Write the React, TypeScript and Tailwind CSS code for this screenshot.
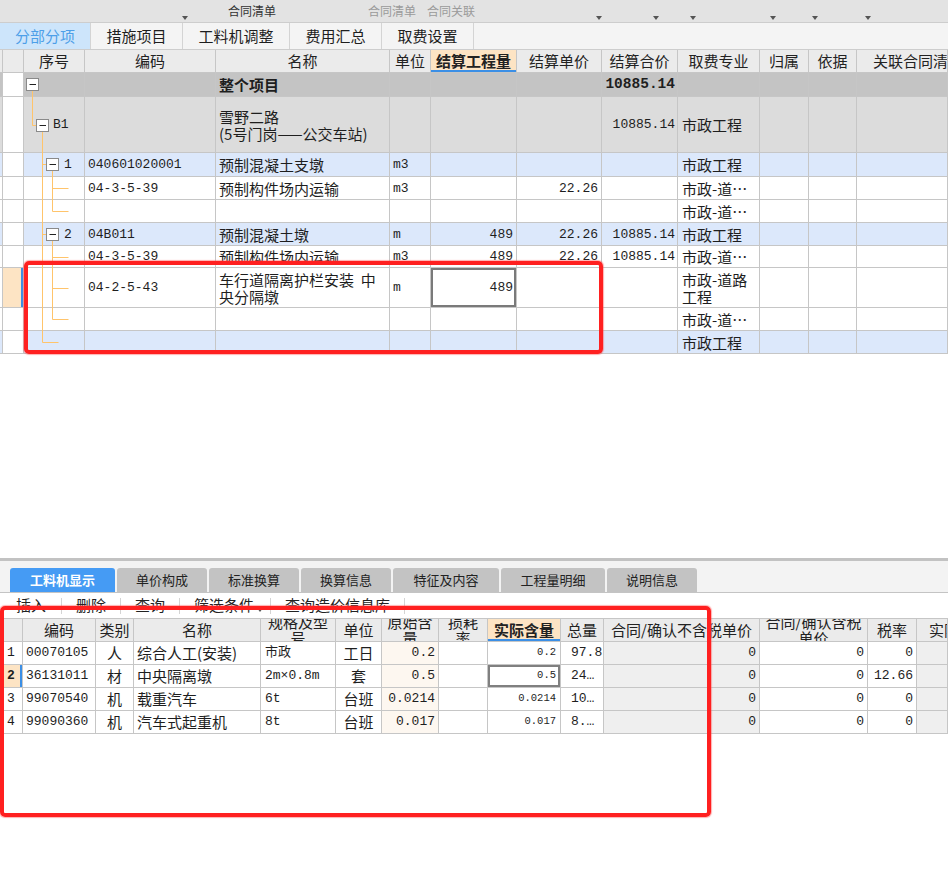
import React from 'react';

const CJK = "font-['Noto_Sans_CJK_SC',sans-serif]";
const MONO = "font-['Liberation_Mono','Noto_Sans_CJK_SC',monospace]";

function Tri() {
  return (
    <span className="inline-block w-0 h-0 border-l-[3px] border-r-[3px] border-t-[4px] border-l-transparent border-r-transparent border-t-[#555]" />
  );
}

function TopBar() {
  return (
    <div className="h-[22px] shrink-0 flex items-center bg-[#e3e3e3] text-[12px] whitespace-nowrap">
      <span className="ml-[182px] self-start mt-[6px]"><Tri /></span>
      <span className="ml-[40px] w-[48px] text-[#333]">合同清单</span>
      <span className="ml-[92px] w-[48px] text-[#9a9a9a]">合同清单</span>
      <span className="ml-[11px] w-[48px] text-[#9a9a9a]">合同关联</span>
      <span className="ml-[121px] self-start mt-[6px]"><Tri /></span>
      <span className="ml-[51px] self-start mt-[6px]"><Tri /></span>
      <span className="ml-[31px] self-start mt-[6px]"><Tri /></span>
      <span className="ml-[74px] self-start mt-[6px]"><Tri /></span>
      <span className="ml-[36px] self-start mt-[6px]"><Tri /></span>
      <span className="ml-[47px] self-start mt-[6px]"><Tri /></span>
    </div>
  );
}

function TabBar() {
  const tabs = [
    { t: '措施项目', w: 'w-[92px]' },
    { t: '工料机调整', w: 'w-[107px]' },
    { t: '费用汇总', w: 'w-[92px]' },
    { t: '取费设置', w: 'w-[92px]' },
  ];
  return (
    <div className="h-[28px] shrink-0 flex bg-[#f4f4f4] border-y border-[#cdcdcd] text-[15px] text-[#1e1e1e]">
      <div className="w-[91px] border-r border-[#d4d4d4] bg-[#cde5fb] text-[#4d9fe8] flex items-center justify-center">分部分项</div>
      {tabs.map((t) => (
        <div key={t.t} className={`${t.w} border-r border-[#d4d4d4] flex items-center justify-center`}>{t.t}</div>
      ))}
    </div>
  );
}

const UW = [
  'w-[22px] border-l',
  'w-[61px]',
  'w-[131px]',
  'w-[174px]',
  'w-[41px]',
  'w-[86px]',
  'w-[85px]',
  'w-[76px]',
  'w-[82px]',
  'w-[49px]',
  'w-[48px]',
  'w-[91px]',
];

const UHEAD = ['', '序号', '编码', '名称', '单位', '结算工程量', '结算单价', '结算合价', '取费专业', '归属', '依据', '关联合同清单'];

type URow = {
  h: string;
  bg: string;
  tree?: React.ReactNode;
  code?: string;
  name?: React.ReactNode;
  unit?: string;
  qty?: string;
  price?: string;
  total?: React.ReactNode;
  spec?: React.ReactNode;
  sel?: boolean;
};

const BLUE = 'bg-[#dce8fb]';

const UROWS: URow[] = [
  { h: 'h-[24px]', bg: 'bg-[#c4c4c4]', name: <b className="font-bold">整个项目</b>, total: <b className="font-bold text-[14.5px]">10885.14</b> },
  {
    h: 'h-[56px]',
    bg: 'bg-[#dcdcdc]',
    tree: <span className={`pl-[29px] ${MONO} text-[13px]`}>B1</span>,
    name: (
      <>
        雪野二路
        <br />
        (5号门岗——公交车站)
      </>
    ),
    total: '10885.14',
    spec: '市政工程',
  },
  { h: 'h-[24px]', bg: BLUE, tree: <span className={`pl-[40px] ${MONO} text-[13px]`}>1</span>, code: '040601020001', name: '预制混凝土支墩', unit: 'm3', spec: '市政工程' },
  { h: 'h-[23px]', bg: 'bg-white', code: '04-3-5-39', name: '预制构件场内运输', unit: 'm3', price: '22.26', spec: '市政-道…' },
  { h: 'h-[23px]', bg: 'bg-white', spec: '市政-道…' },
  { h: 'h-[23px]', bg: BLUE, tree: <span className={`pl-[40px] ${MONO} text-[13px]`}>2</span>, code: '04B011', name: '预制混凝土墩', unit: 'm', qty: '489', price: '22.26', total: '10885.14', spec: '市政工程' },
  { h: 'h-[22px]', bg: 'bg-white', code: '04-3-5-39', name: '预制构件场内运输', unit: 'm3', qty: '489', price: '22.26', total: '10885.14', spec: '市政-道…' },
  {
    h: 'h-[40px]',
    bg: 'bg-white',
    sel: true,
    code: '04-2-5-43',
    name: (
      <>
        车行道隔离护栏安装&nbsp;&nbsp;中
        <br />
        央分隔墩
      </>
    ),
    unit: 'm',
    qty: '489',
    spec: (
      <>
        市政-道路
        <br />
        工程
      </>
    ),
  },
  { h: 'h-[23px]', bg: 'bg-white', spec: '市政-道…' },
  { h: 'h-[23px]', bg: BLUE, spec: '市政工程' },
];

const UC = 'shrink-0 h-full border-r border-[#c6c6c6] flex items-center overflow-hidden whitespace-nowrap';

function TreeLines() {
  const O = '#ffc46b';
  const box = (x: number, y: number) => (
    <g key={`${x}-${y}`}>
      <rect x={x} y={y} width={12} height={12} fill="#fff" stroke="#8a8a8a" strokeWidth={1} />
      <line x1={x + 3} y1={y + 6} x2={x + 9.5} y2={y + 6} stroke="#222" strokeWidth={1} />
    </g>
  );
  return (
    <svg className="absolute left-[24px] top-0 w-[61px] h-[281px] pointer-events-none" width={61} height={281} viewBox="0 0 61 281">
      <g stroke={O} strokeWidth={1} fill="none">
        <path d="M8.5 17.5 V52.5 H12.5" />
        <path d="M18.5 58.5 V269.5 H34.5" />
        <path d="M18.5 91.5 H22.5" />
        <path d="M28.5 97.5 V138.5" />
        <path d="M28.5 115.5 H44.5" />
        <path d="M28.5 138.5 H44.5" />
        <path d="M18.5 161.5 H22.5" />
        <path d="M28.5 167.5 V246.5" />
        <path d="M28.5 184.5 H44.5" />
        <path d="M28.5 215.5 H44.5" />
        <path d="M28.5 246.5 H44.5" />
      </g>
      {box(2.5, 5.5)}
      {box(12.5, 46.5)}
      {box(22.5, 85.5)}
      {box(22.5, 155.5)}
    </svg>
  );
}

function UpperTable() {
  return (
    <div className="shrink-0">
      <div className="flex h-[23px] pl-[2px] bg-[#ebebeb] border-b border-[#c6c6c6] text-[15px] text-[#222]">
        {UHEAD.map((h, i) => (
          <div
            key={i}
            className={`${UW[i]} ${UC} ${i === 11 ? 'justify-start pl-[16px]' : 'justify-center'} ${
              i === 5 ? 'bg-[#fde4c4] font-bold shadow-[inset_0_-2px_0_#3b8fe6]' : ''
            }`}
          >
            {h}
          </div>
        ))}
      </div>
      <div className="relative">
        {UROWS.map((r, idx) => (
          <div key={idx} className={`flex pl-[2px] border-b border-[#c6c6c6] ${r.h} ${r.bg} text-[15px] leading-[17px]`}>
            <div className={`${UW[0]} ${UC} border-[#c6c6c6] ${r.sel ? 'bg-[#fde4c4] shadow-[inset_-2px_0_0_#3b8fe6]' : 'bg-white'}`} />
            <div className={`${UW[1]} ${UC}`}>{r.tree}</div>
            <div className={`${UW[2]} ${UC} pl-[3px] ${MONO} text-[13px]`}>{r.code}</div>
            <div className={`${UW[3]} ${UC} pl-[3px]`}>
              <div>{r.name}</div>
            </div>
            <div className={`${UW[4]} ${UC} pl-[3px] ${MONO} text-[13px]`}>{r.unit}</div>
            <div className={`${UW[5]} ${UC} justify-end pr-[3px] ${MONO} text-[13px] ${r.sel ? 'shadow-[inset_0_0_0_2px_#7a7a7a]' : ''}`}>{r.qty}</div>
            <div className={`${UW[6]} ${UC} justify-end pr-[3px] ${MONO} text-[13px]`}>{r.price}</div>
            <div className={`${UW[7]} ${UC} justify-end pr-[2px] ${MONO} text-[13px]`}>{r.total}</div>
            <div className={`${UW[8]} ${UC} pl-[4px]`}>
              <div>{r.spec}</div>
            </div>
            <div className={`${UW[9]} ${UC}`} />
            <div className={`${UW[10]} ${UC}`} />
            <div className={`${UW[11]} ${UC}`} />
          </div>
        ))}
        <TreeLines />
      </div>
    </div>
  );
}

function BottomTabs() {
  const tabs = [
    { t: '单价构成', w: 'w-[90px]' },
    { t: '标准换算', w: 'w-[90px]' },
    { t: '换算信息', w: 'w-[90px]' },
    { t: '特征及内容', w: 'w-[106px]' },
    { t: '工程量明细', w: 'w-[104px]' },
    { t: '说明信息', w: 'w-[90px]' },
  ];
  return (
    <div className="h-[32px] flex items-end pl-[10px] gap-[2px] bg-[#f3f3f3] border-b border-[#c4c4c4]">
      <div className="w-[105px] h-[24px] rounded-t-[3px] bg-[#459bf4] text-white font-bold text-[13px] flex items-center justify-center">工料机显示</div>
      {tabs.map((t) => (
        <div key={t.t} className={`${t.w} h-[24px] rounded-t-[3px] bg-[#c3c3c3] text-[#222] text-[13px] flex items-center justify-center`}>
          {t.t}
        </div>
      ))}
    </div>
  );
}

function Sep({ ml }: { ml: string }) {
  return <span className={`${ml} w-px h-[16px] bg-[#d4d4d4]`} />;
}

function Toolbar() {
  return (
    <div className="h-[25px] flex items-center bg-white text-[15px] text-[#222] whitespace-nowrap">
      <span className="ml-[16px]">插入</span>
      <Sep ml="ml-[15px]" />
      <span className="ml-[14px]">删除</span>
      <Sep ml="ml-[14px]" />
      <span className="ml-[14px]">查询</span>
      <Sep ml="ml-[14px]" />
      <span className="ml-[14px]">筛选条件</span>
      <span className="ml-[3px] mt-[2px]"><Tri /></span>
      <Sep ml="ml-[7px]" />
      <span className="ml-[14px]">查询造价信息库</span>
      <Sep ml="ml-[14px]" />
    </div>
  );
}

const BW = [
  'w-[23px]',
  'w-[73px]',
  'w-[38px]',
  'w-[127px]',
  'w-[75px]',
  'w-[46px]',
  'w-[57px]',
  'w-[49px]',
  'w-[73px]',
  'w-[43px]',
  'w-[156px]',
  'w-[108px]',
  'w-[49px]',
  'w-[31px]',
];

const BHEAD: React.ReactNode[] = [
  '',
  '编码',
  '类别',
  '名称',
  <>
    规格及型
    <br />号
  </>,
  '单位',
  <>
    原始含
    <br />量
  </>,
  <>
    损耗
    <br />率
  </>,
  '实际含量',
  '总量',
  '合同/确认不含税单价',
  <>
    合同/确认含税
    <br />
    单价
  </>,
  '税率',
  '实际',
];

const BROWS = [
  ['1', '00070105', '人', '综合人工(安装)', '市政', '工日', '0.2', '', '0.2', '97.8', '0', '0', '0'],
  ['2', '36131011', '材', '中央隔离墩', '2m×0.8m', '套', '0.5', '', '0.5', '24…', '0', '0', '12.66'],
  ['3', '99070540', '机', '载重汽车', '6t', '台班', '0.0214', '', '0.0214', '10…', '0', '0', '0'],
  ['4', '99090360', '机', '汽车式起重机', '8t', '台班', '0.017', '', '0.017', '8.…', '0', '0', '0'],
];

const BC = 'shrink-0 h-full border-r border-[#c6c6c6] flex items-center overflow-hidden whitespace-nowrap';

function BottomTable() {
  return (
    <div>
      <div className="flex h-[24px] border-y border-[#c6c6c6] bg-[#ebebeb] text-[15px] leading-[16px] text-[#222]">
        {BHEAD.map((h, i) => (
          <div
            key={i}
            className={`${BW[i]} ${BC} text-center ${i === 13 ? 'justify-start pl-[12px]' : 'justify-center'} ${
              i === 8 ? 'bg-[#fde4c4] font-bold shadow-[inset_0_-2px_0_#3b8fe6]' : ''
            }`}
          >
            <div>{h}</div>
          </div>
        ))}
      </div>
      {BROWS.map((r, idx) => {
        const sel = idx === 1;
        return (
          <div key={idx} className="flex h-[23px] border-b border-[#c6c6c6] bg-white text-[15px]">
            <div className={`${BW[0]} ${BC} justify-center ${MONO} text-[13px] ${sel ? 'bg-[#fde4c4] font-bold shadow-[inset_-2px_0_0_#3b8fe6]' : ''}`}>{r[0]}</div>
            <div className={`${BW[1]} ${BC} pl-[3px] ${MONO} text-[13px]`}>{r[1]}</div>
            <div className={`${BW[2]} ${BC} justify-center`}>{r[2]}</div>
            <div className={`${BW[3]} ${BC} pl-[3px]`}>{r[3]}</div>
            <div className={`${BW[4]} ${BC} pl-[4px] ${MONO} text-[13px]`}>{r[4]}</div>
            <div className={`${BW[5]} ${BC} justify-center`}>{r[5]}</div>
            <div className={`${BW[6]} ${BC} justify-end pr-[3px] bg-[#fdf7f0] ${MONO} text-[13px]`}>{r[6]}</div>
            <div className={`${BW[7]} ${BC}`}>{r[7]}</div>
            <div className={`${BW[8]} ${BC} justify-end pr-[4px] ${MONO} text-[10.5px] ${sel ? 'shadow-[inset_0_0_0_2px_#808080]' : ''}`}>{r[8]}</div>
            <div className={`${BW[9]} ${BC} pl-[10px] ${MONO} text-[13px]`}>{r[9]}</div>
            <div className={`${BW[10]} ${BC} justify-end pr-[3px] bg-[#efefef] ${MONO} text-[13px]`}>{r[10]}</div>
            <div className={`${BW[11]} ${BC} justify-end pr-[3px] ${MONO} text-[13px]`}>{r[11]}</div>
            <div className={`${BW[12]} ${BC} justify-end pr-[3px] ${MONO} text-[13px]`}>{r[12]}</div>
            <div className={`${BW[13]} ${BC} bg-[#efefef]`} />
          </div>
        );
      })}
    </div>
  );
}

export default function App() {
  return (
    <div className={`relative w-[948px] h-[872px] overflow-hidden bg-white text-[#1e1e1e] ${CJK}`}>
      <div className="flex flex-col h-[558px]">
        <TopBar />
        <TabBar />
        <UpperTable />
        <div className="flex-1 bg-white" />
      </div>
      <div className="h-[3px] bg-[#c2c2c2]" />
      <BottomTabs />
      <Toolbar />
      <BottomTable />
      <div className="absolute left-[24px] top-[261px] w-[579px] h-[93px] border-[4px] border-[#ff2020] rounded-[5px] shadow-[0_0_1px_1px_rgba(255,80,80,0.45)] pointer-events-none" />
      <div className="absolute left-0 top-[606px] w-[711px] h-[211px] border-[4px] border-[#ff2020] rounded-[5px] shadow-[0_0_1px_1px_rgba(255,80,80,0.45)] pointer-events-none" />
    </div>
  );
}
